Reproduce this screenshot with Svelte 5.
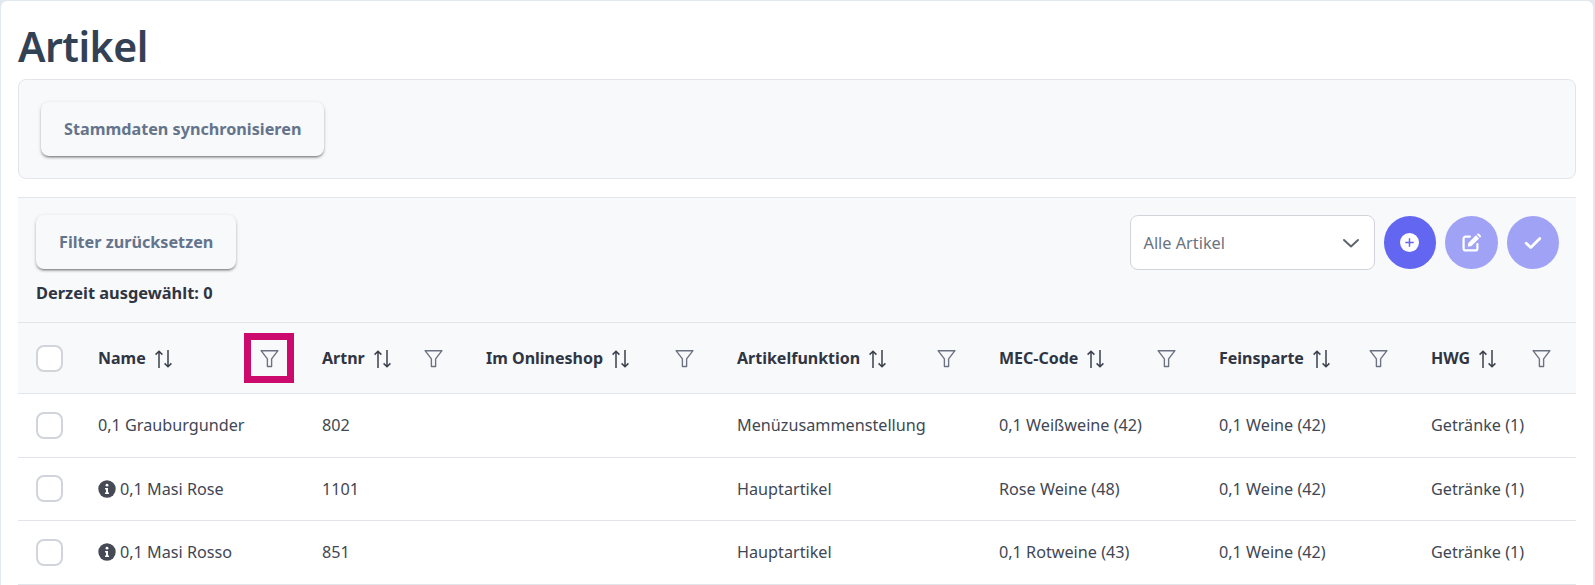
<script>
  const columns = ['Name', 'Artnr', 'Im Onlineshop', 'Artikelfunktion', 'MEC-Code', 'Feinsparte', 'HWG'];
  const widths = [223, 164, 251, 262, 220, 212, 163];

  const rows = [
    { name: '0,1 Grauburgunder', info: false, nr: '802', fn: 'Menüzusammenstellung', mec: '0,1 Weißweine (42)', fein: '0,1 Weine (42)', hwg: 'Getränke (1)' },
    { name: '0,1 Masi Rose', info: true, nr: '1101', fn: 'Hauptartikel', mec: 'Rose Weine (48)', fein: '0,1 Weine (42)', hwg: 'Getränke (1)' },
    { name: '0,1 Masi Rosso', info: true, nr: '851', fn: 'Hauptartikel', mec: '0,1 Rotweine (43)', fein: '0,1 Weine (42)', hwg: 'Getränke (1)' }
  ];
</script>

<div class="page">
  <main class="card">
    <h1>Artikel</h1>

    <section class="panel">
      <button class="soft">Stammdaten synchronisieren</button>
    </section>

    <section class="toolbar">
      <div class="toolbar-left">
        <button class="soft">Filter zurücksetzen</button>
        <p class="selected">Derzeit ausgewählt: 0</p>
      </div>
      <div class="toolbar-right">
        <div class="select">
          <span>Alle Artikel</span>
          <svg width="18" height="10" viewBox="0 0 18 10" fill="none" stroke="#5f6672" stroke-width="2" stroke-linecap="round" stroke-linejoin="round"><path d="M2 2l7 6.5L16 2" /></svg>
        </div>
        <button class="round strong" aria-label="Neu">
          <svg width="19" height="19" viewBox="0 0 18 18"><circle cx="9" cy="9" r="9" fill="#fff" /><path d="M9 5v8M5 9h8" stroke="#6366f1" stroke-width="1.4" /></svg>
        </button>
        <button class="round" aria-label="Bearbeiten">
          <svg width="19" height="19" viewBox="0 0 18 18" fill="none"><path d="M7.5 3.4H3.4A1.9 1.9 0 0 0 1.5 5.3v9.3a1.9 1.9 0 0 0 1.9 1.9h9.3a1.9 1.9 0 0 0 1.9-1.9v-4.1" stroke="#fff" stroke-width="2.1" stroke-linecap="round" /><path d="M6 9.4 13.2 2.2l3 3L9 12.4l-3.6.6z" fill="#fff" /><path d="M14 1.4l.7-.7a1 1 0 0 1 1.4 0l1.6 1.6a1 1 0 0 1 0 1.4l-.7.7z" fill="#fff" /></svg>
        </button>
        <button class="round" aria-label="Bestätigen">
          <svg width="18" height="14" viewBox="0 0 18 14" fill="none"><path d="M2.2 7.3l4.6 4.3L15.8 2.6" stroke="#fff" stroke-width="2.8" stroke-linecap="round" stroke-linejoin="round" /></svg>
        </button>
      </div>
    </section>

    <table>
      <colgroup>
        <col class="check-col" />
        {#each widths as w}
          <col style="width: {w}px" />
        {/each}
      </colgroup>
      <thead>
        <tr>
          <th><span class="check"></span></th>
          {#each columns as c, i}
            <th>
              <div class="head">
                <span class="label">{c}</span>
                <svg class="sort" width="19" height="20" viewBox="0 0 19 20" fill="none" stroke="#3a404c" stroke-width="1.5"><path d="M5 19V2M1.6 5.6 5 2.2l3.4 3.4M14 1v17M10.6 14.4 14 17.8l3.4-3.4" /></svg>
                <span class="filter" class:marked={i === 0}>
                  <svg width="19" height="19" viewBox="0 0 18 18" fill="none" stroke="#6b7280" stroke-width="1.3" stroke-linejoin="round"><path d="M1 1.6h16L11 9.4v7.2H7V9.4z" /></svg>
                </span>
              </div>
            </th>
          {/each}
        </tr>
      </thead>
      <tbody>
        {#each rows as r}
          <tr>
            <td><span class="check"></span></td>
            <td>
              {#if r.info}
                <svg class="info" width="18" height="18" viewBox="0 0 18 18"><circle cx="9" cy="9" r="8.7" fill="#454a55" /><circle cx="9" cy="5.2" r="1.4" fill="#fff" /><path d="M7 7.9h3v4.6h1v1.5H7v-1.5h1v-3H7z" fill="#fff" /></svg>
              {/if}{r.name}
            </td>
            <td>{r.nr}</td>
            <td></td>
            <td>{r.fn}</td>
            <td>{r.mec}</td>
            <td>{r.fein}</td>
            <td>{r.hwg}</td>
          </tr>
        {/each}
      </tbody>
    </table>
  </main>
</div>

<style>
  :global(body) {
    margin: 0;
    background: #e2e8f0;
    font-family: "Noto Sans", "Open Sans", sans-serif;
  }

  .page {
    height: 585px;
    padding: 1px 2px 0 1px;
    box-sizing: border-box;
    overflow: hidden;
  }

  .card {
    background: #fff;
    border-radius: 6px 6px 0 0;
    padding: 0 17px;
    height: 100%;
  }

  h1 {
    margin: 0;
    height: 78px;
    line-height: 90px;
    font-size: 41px;
    font-weight: 600;
    color: #334155;
    letter-spacing: -0.5px;
  }

  .panel {
    background: #f8f9fb;
    border: 1px solid #e2e5ea;
    border-radius: 8px;
    height: 100px;
    box-sizing: border-box;
    padding: 22px;
    margin-bottom: 18px;
  }

  button.soft {
    display: block;
    height: 54px;
    padding: 0 23px;
    border: 0;
    border-radius: 8px;
    background: #f8f9fb;
    color: #64748b;
    font: 700 16.2px "Noto Sans", sans-serif;
    box-shadow: 0 2px 3px -1px rgba(0, 0, 0, 0.55), 0 1px 4px rgba(0, 0, 0, 0.12);
  }

  .toolbar {
    display: flex;
    justify-content: space-between;
    height: 125px;
    box-sizing: border-box;
    padding: 17px 17px 0 18px;
    background: #f8f9fb;
    border-top: 1px solid #e2e5ea;
  }

  .selected {
    margin: 12px 0 0;
    font-size: 16.4px;
    font-weight: 700;
    color: #2f3542;
  }

  .toolbar-right {
    display: flex;
    align-items: flex-start;
    gap: 9px;
  }

  .select {
    width: 245px;
    height: 55px;
    box-sizing: border-box;
    display: flex;
    align-items: center;
    justify-content: space-between;
    padding: 0 14px 0 13px;
    background: #fff;
    border: 1px solid #d1d5db;
    border-radius: 8px;
    color: #6b7280;
    font-size: 16.3px;
  }

  button.round {
    width: 52.5px;
    height: 53px;
    margin-top: 1px;
    border: 0;
    padding: 0;
    border-radius: 50%;
    background: #a0a3f5;
    display: flex;
    align-items: center;
    justify-content: center;
  }

  button.round.strong {
    background: #6366f1;
  }

  table {
    width: 1558px;
    table-layout: fixed;
    border-collapse: collapse;
    font-size: 16.2px;
    color: #414753;
  }

  .check-col {
    width: 63px;
  }

  thead {
    background: #f8f9fb;
  }

  th {
    height: 70px;
    padding: 0 0 0 18px;
    text-align: left;
    border-top: 1px solid #e2e5ea;
    border-bottom: 1px solid #e2e5ea;
    font-size: 16px;
    font-weight: 700;
    color: #2f3542;
  }

  td {
    height: 62.5px;
    padding: 0 0 0 18px;
    border-bottom: 1px solid #e2e5ea;
    white-space: nowrap;
  }

  .head {
    display: flex;
    align-items: center;
    gap: 8px;
    padding-top: 1px;
  }

  .label {
    margin-bottom: 2px;
  }

  th:nth-child(2) .head {
    margin-left: -1px;
  }

  td:nth-child(2) {
    padding-left: 17px;
  }

  .filter {
    margin-left: auto;
    margin-right: 25px;
    width: 19px;
    height: 19px;
    display: block;
    position: relative;
  }

  .filter.marked::after {
    content: "";
    position: absolute;
    left: -16px;
    top: -16px;
    width: 50px;
    height: 50px;
    box-sizing: border-box;
    border: 7px solid #cc0a6e;
  }

  .check {
    display: block;
    width: 27px;
    height: 27px;
    box-sizing: border-box;
    background: #fff;
    border: 2px solid #d1d5db;
    border-radius: 8px;
  }

  .info {
    vertical-align: -3px;
    margin-right: 4px;
  }

  .sort {
    flex-shrink: 0;
  }
</style>
